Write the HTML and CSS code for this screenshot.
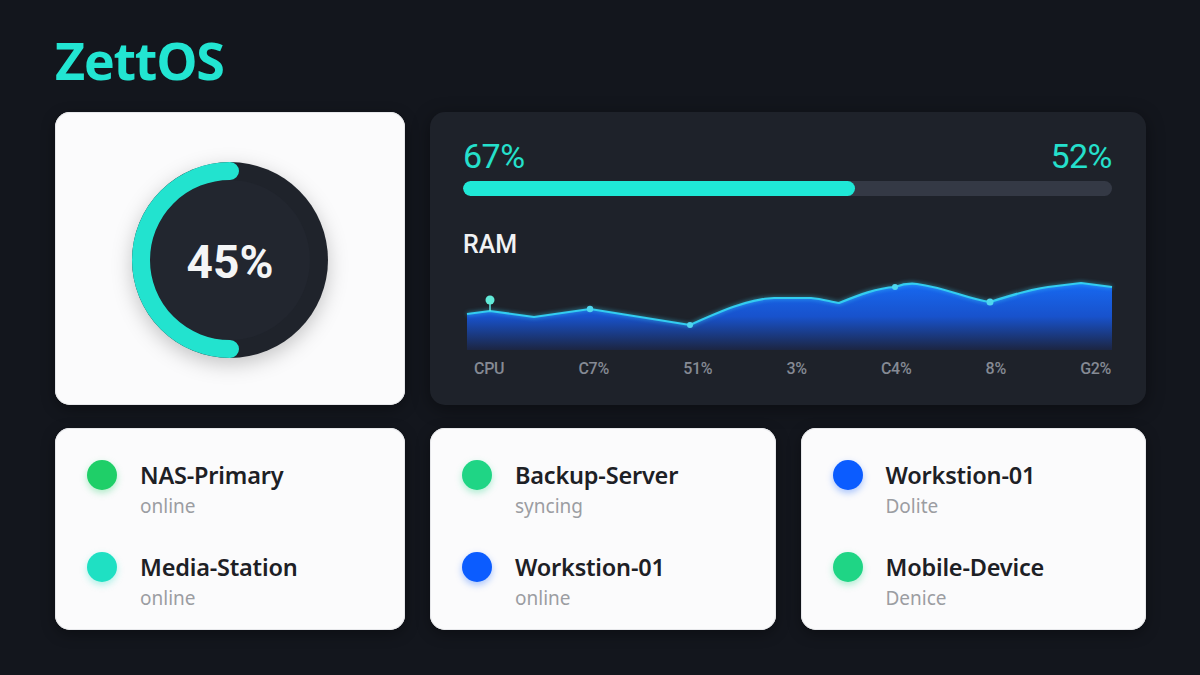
FILE: index.html
```html
<!DOCTYPE html>
<html lang="en">
<head>
<meta charset="utf-8">
<title>ZettOS</title>
<link rel="stylesheet" href="styles.css">
</head>
<body>
<div class="page">
  <h1 class="logo">ZettOS</h1>
  <div class="grid">
    <section class="card light gauge">
      <div class="gauge-wrap">
        <svg class="gauge-svg" width="200" height="200" viewBox="0 0 200 200">
          <circle cx="100" cy="100" r="98" fill="#1f232b"/>
          <circle cx="100" cy="100" r="80" fill="#22262f"/>
          <path d="M100 11 A89 89 0 0 0 100 189" fill="none" stroke="#22e3cf" stroke-width="18" stroke-linecap="round"/>
        </svg>
        <span class="gauge-value">45%</span>
      </div>
    </section>

    <section class="card dark stats">
      <div class="stat-row">
        <span class="pct">67%</span>
        <span class="pct">52%</span>
      </div>
      <div class="bar"><div class="bar-fill" style="width:60.4%"></div></div>
      <h2 class="ram">RAM</h2>
      <svg class="chart" width="645" height="75" viewBox="0 0 645 75">
        <defs>
          <linearGradient id="area" x1="0" y1="0" x2="0" y2="1">
            <stop offset="0" stop-color="#1769f2"/>
            <stop offset="0.5" stop-color="#1852cc"/>
            <stop offset="1" stop-color="#1c2542"/>
          </linearGradient>
        </defs>
        <path d="M0 39 L23 36 L67 42 L123 34 L223 50 C250 38 280 24 307 23 L344 23 C356 24 364 27 372 28 C392 20 410 13 428 12 C436 9 442 8 450 9 C480 13 500 24 523 27 C545 20 565 14 581 12 L614 8 L645 12 L645 75 L0 75 Z" fill="url(#area)"/>
        <path class="line" d="M0 39 L23 36 L67 42 L123 34 L223 50 C250 38 280 24 307 23 L344 23 C356 24 364 27 372 28 C392 20 410 13 428 12 C436 9 442 8 450 9 C480 13 500 24 523 27 C545 20 565 14 581 12 L614 8 L645 12" fill="none" stroke="#33cdf0" stroke-width="2.2" stroke-linejoin="round"/>
        <line x1="23" y1="27" x2="23" y2="36" stroke="#5fe6e6" stroke-width="1.5"/>
        <circle cx="23" cy="25" r="4.5" fill="#62ead8"/>
        <circle cx="123" cy="34" r="3.2" fill="#4fd6ee"/>
        <circle cx="223" cy="50" r="3" fill="#4fd6ee"/>
        <circle cx="428" cy="12" r="3" fill="#4fd6ee"/>
        <circle cx="523" cy="27" r="3.5" fill="#4fd6ee"/>
      </svg>
      <div class="axis">
        <span>CPU</span><span>C7%</span><span>51%</span><span>3%</span><span>C4%</span><span>8%</span><span>G2%</span>
      </div>
    </section>

    <section class="card light devices">
      <div class="device">
        <span class="dot green"></span>
        <div class="info"><div class="name">NAS-Primary</div><div class="status">online</div></div>
      </div>
      <div class="device">
        <span class="dot teal"></span>
        <div class="info"><div class="name">Media-Station</div><div class="status">online</div></div>
      </div>
    </section>

    <section class="card light devices">
      <div class="device">
        <span class="dot green2"></span>
        <div class="info"><div class="name">Backup-Server</div><div class="status">syncing</div></div>
      </div>
      <div class="device">
        <span class="dot blue"></span>
        <div class="info"><div class="name">Workstion-01</div><div class="status">online</div></div>
      </div>
    </section>

    <section class="card light devices">
      <div class="device">
        <span class="dot blue"></span>
        <div class="info"><div class="name">Workstion-01</div><div class="status">Dolite</div></div>
      </div>
      <div class="device">
        <span class="dot green2"></span>
        <div class="info"><div class="name">Mobile-Device</div><div class="status">Denice</div></div>
      </div>
    </section>
  </div>
</div>
</body>
</html>
```

FILE: styles.css
```css
* { box-sizing: border-box; }

html, body {
  margin: 0;
  padding: 0;
}

body {
  width: 1200px;
  height: 675px;
  overflow: hidden;
  background: #13161d;
  font-family: "Noto Sans", "Open Sans", sans-serif;
}

.page {
  padding: 34px 54px 0 55px;
}

.logo {
  margin: 0 0 26px 0;
  font-family: "Open Sans", sans-serif;
  font-weight: 700;
  font-size: 52px;
  line-height: 52px;
  color: #22e5d2;
  letter-spacing: -1.2px;
}

.grid {
  display: grid;
  grid-template-columns: 350px 1fr 1fr;
  grid-template-rows: 293px 202px;
  column-gap: 25px;
  row-gap: 23px;
}

.card {
  border-radius: 15px;
}

.card.light {
  background: #fbfbfc;
  box-shadow: inset 0 0 0 1px #e6e7ea, 0 4px 14px rgba(0, 0, 0, 0.35);
}

.card.dark {
  background: #1e222a;
  box-shadow: 0 4px 18px rgba(0, 0, 0, 0.4);
}

/* gauge */
.gauge {
  display: flex;
  align-items: center;
  justify-content: center;
}

.gauge-wrap {
  position: relative;
  width: 200px;
  height: 200px;
  margin-top: 3px;
}

.gauge-svg {
  display: block;
  filter: drop-shadow(0 6px 10px rgba(0, 0, 0, 0.22));
}

.gauge-value {
  position: absolute;
  inset: 0;
  display: flex;
  align-items: center;
  justify-content: center;
  font-family: "Roboto", sans-serif;
  font-weight: 700;
  font-size: 46px;
  color: #f4f5f6;
  padding-top: 4px;
}

/* stats */
.stats {
  grid-column: 2 / 4;
  padding: 27px 34px 0 33px;
  display: flex;
  flex-direction: column;
}

.stat-row {
  display: flex;
  justify-content: space-between;
}

.pct {
  font-family: "Roboto", sans-serif;
  font-weight: 400;
  font-size: 34px;
  line-height: 34px;
  color: #25e0cc;
  letter-spacing: -0.5px;
}

.bar {
  margin-top: 8px;
  height: 15px;
  border-radius: 8px;
  background: #343945;
  overflow: hidden;
}

.bar-fill {
  height: 100%;
  border-radius: 8px;
  background: #1fe8d6;
}

.ram {
  margin: 36px 0 0 0;
  font-family: "Roboto", sans-serif;
  font-weight: 500;
  font-size: 25px;
  line-height: 25px;
  color: #f1f2f4;
}

.chart {
  display: block;
  margin: 18px 0 0 4px;
  overflow: visible;
}

.chart .line {
  filter: drop-shadow(0 0 2px rgba(60, 220, 255, 0.7));
}

.axis {
  margin-top: 9px;
  padding-left: 11px;
  padding-right: 1px;
  display: flex;
  justify-content: space-between;
  font-family: "Roboto", sans-serif;
  font-weight: 500;
  font-size: 16px;
  line-height: 20px;
  color: #858a94;
  letter-spacing: -0.3px;
}

/* devices */
.devices {
  padding: 32px 20px 0 32px;
  display: flex;
  flex-direction: column;
  gap: 33px;
}

.device {
  display: flex;
  align-items: flex-start;
  gap: 23px;
}

.dot {
  flex: none;
  width: 30px;
  height: 30px;
  border-radius: 50%;
}

.dot.green { background: #1fcf68; box-shadow: 0 3px 7px rgba(31, 207, 104, 0.35); }
.dot.teal { background: #1fe0c3; box-shadow: 0 3px 7px rgba(31, 224, 195, 0.35); }
.dot.green2 { background: #1fd585; box-shadow: 0 3px 7px rgba(31, 213, 133, 0.35); }
.dot.blue { background: #0b5cff; box-shadow: 0 3px 7px rgba(11, 92, 255, 0.35); }

.name {
  font-weight: 600;
  font-size: 23.5px;
  line-height: 30px;
  color: #1d2025;
  letter-spacing: -0.2px;
}

.status {
  margin-top: 3px;
  font-size: 19px;
  line-height: 26px;
  color: #9b9da2;
}
```
